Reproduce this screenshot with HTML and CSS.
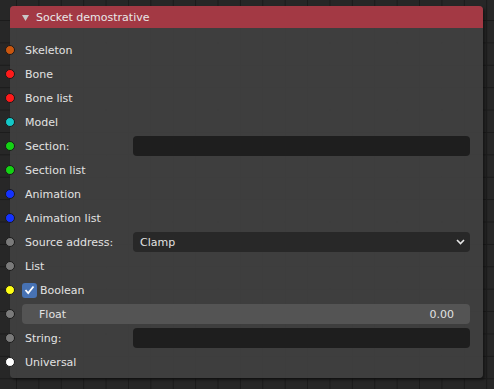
FILE: index.html
```html
<!DOCTYPE html>
<html lang="en">
  <head>
    <meta charset="UTF-8" />
    <title>Socket demostrative</title>
    <link rel="stylesheet" href="styles.css">
  </head>
  <body>
    <!-- Node -->
    <div class="node">
      <div class="node-header">
        <svg class="collapse" width="7" height="6" viewBox="0 0 7 6">
          <polygon points="0,0 7,0 3.5,6" fill="#c8c8c8" />
        </svg>
        <span>Socket demostrative</span>
      </div>

      <div class="node-body">
        <div class="row"><span class="socket skeleton"></span><span class="label">Skeleton</span></div>
        <div class="row"><span class="socket bone"></span><span class="label">Bone</span></div>
        <div class="row"><span class="socket bone"></span><span class="label">Bone list</span></div>
        <div class="row"><span class="socket model"></span><span class="label">Model</span></div>
        <div class="row">
          <span class="socket section"></span>
          <span class="label fixed">Section:</span>
          <div class="text-field"></div>
        </div>
        <div class="row"><span class="socket section"></span><span class="label">Section list</span></div>
        <div class="row"><span class="socket anim"></span><span class="label">Animation</span></div>
        <div class="row"><span class="socket anim"></span><span class="label">Animation list</span></div>
        <div class="row">
          <span class="socket grey"></span>
          <span class="label fixed">Source address:</span>
          <div class="dropdown">
            <span>Clamp</span>
            <svg width="9" height="6" viewBox="0 0 9 6">
              <polyline points="1,1 4.5,4.5 8,1" fill="none" stroke="#e6e6e6" stroke-width="1.6" />
            </svg>
          </div>
        </div>
        <div class="row"><span class="socket grey"></span><span class="label">List</span></div>
        <div class="row">
          <span class="socket bool"></span>
          <span class="checkbox">
            <svg width="11" height="10" viewBox="0 0 11 10">
              <polyline points="1.5,5 4.2,8 9.5,1.5" fill="none" stroke="#fff" stroke-width="1.8" />
            </svg>
          </span>
          <span class="label">Boolean</span>
        </div>
        <div class="row">
          <span class="socket grey"></span>
          <div class="slider"><span>Float</span><span>0.00</span></div>
        </div>
        <div class="row">
          <span class="socket grey"></span>
          <span class="label fixed">String:</span>
          <div class="text-field"></div>
        </div>
        <div class="row"><span class="socket universal"></span><span class="label">Universal</span></div>
      </div>
    </div>
  </body>
</html>
```

FILE: styles.css
```css
/* Node editor backdrop with grid */
body {
  margin: 0;
  padding: 6px 0 0 10px;
  height: 389px;
  box-sizing: border-box;
  font-family: "DejaVu Sans", sans-serif;
  font-size: 11px;
  color: #e2e2e2;
  background-color: #272727;
  background-image:
    linear-gradient(to right, #1b1b1b 1px, transparent 1px),
    linear-gradient(to bottom, #1b1b1b 1px, transparent 1px);
  background-size: 22.4px 22.4px;
  background-position: 16px 20px;
  overflow: hidden;
}

.node {
  width: 473px;
  height: 372px;
  border-radius: 4px;
  background-color: rgba(64, 64, 64, 0.94);
  box-shadow: 2px 2px 3px rgba(0, 0, 0, 0.45);
}

.node-header {
  height: 22px;
  display: flex;
  align-items: center;
  padding-left: 12px;
  gap: 7px;
  background-color: #a33944;
  border-radius: 4px 4px 0 0;
  color: #e8e8e8;
}

.collapse {
  margin-top: 1px;
}

.node-body {
  display: flex;
  flex-direction: column;
  padding-top: 10px;
}

.row {
  position: relative;
  height: 24px;
  display: flex;
  align-items: center;
  padding: 0 13px 0 15px;
}

/* Socket dots sit on the node edge */
.socket {
  position: absolute;
  left: -5px;
  top: 7px;
  width: 8px;
  height: 8px;
  border-radius: 50%;
  border: 1px solid #1a1a1a;
}

.skeleton { background-color: #c9560f; }
.bone { background-color: #ff1a1a; }
.model { background-color: #14c8c8; }
.section { background-color: #14d214; }
.anim { background-color: #1432ff; }
.grey { background-color: #7a7a7a; }
.bool { background-color: #ffff14; }
.universal { background-color: #ffffff; }

.label.fixed {
  width: 108px;
  flex-shrink: 0;
}

.text-field {
  flex: 1;
  height: 20px;
  border-radius: 4px;
  background-color: #1e1e1e;
}

.dropdown {
  flex: 1;
  height: 20px;
  border-radius: 4px;
  background-color: #282828;
  display: flex;
  align-items: center;
  justify-content: space-between;
  padding: 0 5px 0 7px;
}

.checkbox {
  width: 15px;
  height: 15px;
  margin-left: -3px;
  margin-right: 3px;
  border-radius: 3px;
  background-color: #4772b3;
  display: flex;
  align-items: center;
  justify-content: center;
}

.slider {
  flex: 1;
  margin-left: -3px;
  height: 20px;
  border-radius: 4px;
  background-color: #545454;
  display: flex;
  align-items: center;
  justify-content: space-between;
  padding: 0 16px 0 17px;
}
```
